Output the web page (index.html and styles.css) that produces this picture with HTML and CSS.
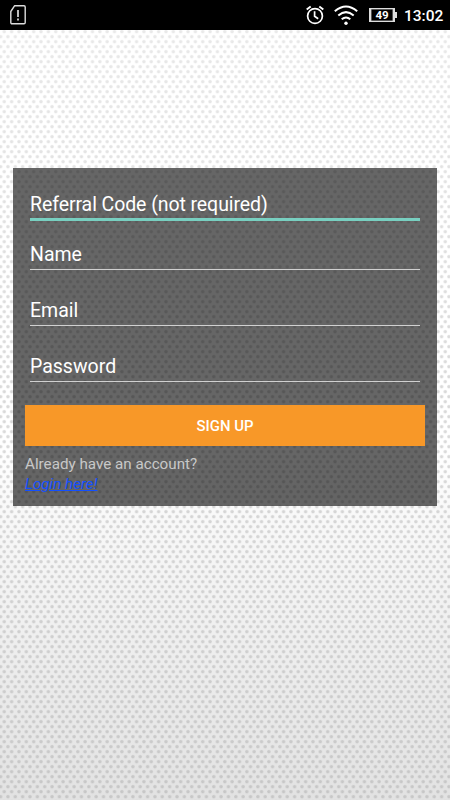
FILE: index.html
```html
<!DOCTYPE html>
<html lang="en">
<head>
  <meta charset="UTF-8" />
  <meta name="viewport" content="width=device-width, initial-scale=1.0" />
  <title>Sign Up</title>
  <link rel="stylesheet" href="styles.css">
</head>
<body>
  <!-- Dotted backdrop -->
  <svg class="dots" width="450" height="800">
    <defs>
      <pattern id="dot" x="0.6" y="29.2" width="7.35" height="10" patternUnits="userSpaceOnUse">
        <circle cx="3.675" cy="2.5" r="1.7" />
        <circle cx="0" cy="7.5" r="1.7" />
        <circle cx="7.35" cy="7.5" r="1.7" />
      </pattern>
      <linearGradient id="fade" x1="0" y1="0" x2="0" y2="1">
        <stop offset="0" stop-color="#fff" stop-opacity=".55" />
        <stop offset=".5" stop-color="#fff" stop-opacity="1" />
        <stop offset="1" stop-color="#fff" stop-opacity=".8" />
      </linearGradient>
      <mask id="fade-mask"><rect width="450" height="800" fill="url(#fade)" /></mask>
    </defs>
    <rect width="450" height="800" fill="url(#dot)" mask="url(#fade-mask)" />
  </svg>

  <header class="status-bar">
    <svg class="sim-icon" width="16" height="20" viewBox="0 0 16 20" fill="none" stroke="#ddd" stroke-width="1.4">
      <path d="M4.5.8H14q1.2 0 1.2 1.2v15.5q0 1.2-1.2 1.2H2q-1.2 0-1.2-1.2V6.5z" stroke-linejoin="round" />
      <path d="M8 5v7M8 13.5v2" stroke-width="1.7" />
    </svg>
    <div class="status-icons">
      <svg class="alarm-icon" width="18" height="20" viewBox="0 0 18 20" fill="none" stroke="#fff" stroke-width="1.7">
        <circle cx="9" cy="11" r="7.4" />
        <path d="M8.6 6.300v5l3.600 2.400" />
        <path d="M.7 4.600l4-3.200M17.300 4.600l-4-3.200" stroke-width="1.9" />
      </svg>
      <svg class="wifi-icon" width="24" height="21" viewBox="0 0 24 21" fill="none" stroke="#fff" stroke-width="2">
        <path d="M.8 6.300Q12-3.300 23.200 6.300M4.300 10.400Q12 3.900 19.700 10.400M7.700 14.300Q12 10.700 16.300 14.300" />
        <circle cx="12" cy="18.3" r="1.7" fill="#fff" stroke="none" />
      </svg>
      <div class="battery">49</div>
      <div class="clock">13:02</div>
    </div>
  </header>

  <main>
    <form class="signup">
      <input class="field active" type="text" placeholder="Referral Code (not required)">
      <input class="field" type="text" placeholder="Name">
      <input class="field" type="email" placeholder="Email">
      <input class="field" type="password" placeholder="Password">
      <button class="signup-button" type="button">SIGN UP</button>
      <p class="login-text">Already have an account?</p>
      <a class="login-link" href="#">Login here!</a>
    </form>
  </main>
</body>
</html>
```
FILE: styles.css
```css
* { margin: 0; padding: 0; box-sizing: border-box; }
html, body { height: 100%; }
body {
  font-family: Roboto, sans-serif;
  display: flex;
  flex-direction: column;
  overflow: hidden;
  background: linear-gradient(#fff 0, #fff 450px, #f8f8f8 520px, #e2e2e2 800px);
}
.dots {
  position: absolute;
  top: 0;
  left: 0;
  z-index: -1;
  fill: rgba(0,0,0,0.15);
}

/* Status bar */
.status-bar {
  height: 30px;
  flex: none;
  background: #000;
  color: #fff;
  display: flex;
  align-items: center;
  justify-content: space-between;
  padding: 0 8px 0 10px;
}
.status-icons {
  display: flex;
  align-items: center;
}
.alarm-icon { margin-right: 10px; }
.wifi-icon { margin-right: 11px; }
.battery {
  position: relative;
  width: 26px;
  height: 14px;
  margin-right: 9px;
  border: 2px solid #ddd;
  border-width: 1px 2px;
  box-shadow: inset 0 0 0 0.5px #aaa;
  font-size: 11.5px;
  font-weight: 700;
  line-height: 13px;
  text-align: center;
}
.battery::after {
  content: "";
  position: absolute;
  right: -4px;
  top: 3px;
  width: 2px;
  height: 6px;
  background: #ddd;
}
.clock {
  padding-top: 1px;
  font-size: 15.5px;
  font-weight: 500;
  width: 38px;
  white-space: nowrap;
}

/* Sign up form */
main { padding: 138px 13px 0 12.5px; }
.signup {
  height: 338px;
  padding: 16px 12px 0 12.5px;
  background: rgba(0,0,0,0.6);
  display: flex;
  flex-direction: column;
}
.field {
  height: 37px;
  margin: 0 5px 19px;
  padding: 6px 0 0;
  border: 0;
  border-bottom: 1px solid #d0d0d0;
  background: none;
  color: #fff;
  font-family: inherit;
  font-size: 19.5px;
  outline: none;
}
.field::placeholder { color: #fff; opacity: 1; }
.field.active {
  margin-bottom: 12px;
  padding-top: 7px;
  border-bottom: 3px solid #78cfc0;
  letter-spacing: -0.08px;
}
.signup-button {
  height: 41px;
  margin-top: 4px;
  padding-top: 1px;
  border: 0;
  background: #f89828;
  color: #fff;
  font-family: inherit;
  font-size: 14.9px;
  font-weight: 500;
}
.login-text {
  margin-top: 8px;
  color: #c8c8c8;
  font-size: 15.2px;
  line-height: 20px;
}
.login-link {
  align-self: flex-start;
  color: #1450ff;
  font-size: 15.2px;
  font-style: italic;
  line-height: 20px;
}
```
